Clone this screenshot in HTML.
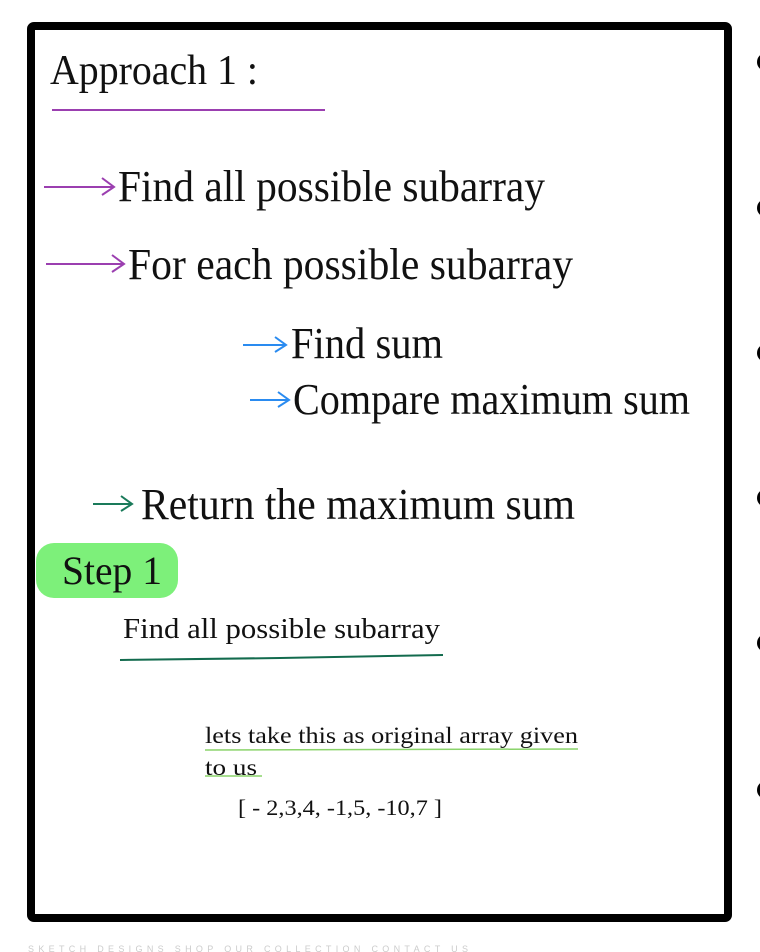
<!DOCTYPE html>
<html><head><meta charset="utf-8"><style>
html,body{margin:0;padding:0;background:#fff;width:760px;height:952px;overflow:hidden}
svg{display:block}
text{font-family:"Liberation Serif",serif;fill:#111}
</style></head><body>
<svg width="760" height="952" viewBox="0 0 760 952">
<rect x="31" y="26" width="697" height="892" rx="3" fill="#fff" stroke="#000" stroke-width="8"/>
<g fill="#000">
<circle cx="766" cy="62" r="9"/><circle cx="766" cy="208" r="9"/><circle cx="766" cy="353" r="9"/>
<circle cx="766" cy="498" r="9"/><circle cx="766" cy="643" r="9"/><circle cx="766" cy="790" r="9"/>
</g>
<text x="50" y="84" font-size="42" textLength="208" lengthAdjust="spacingAndGlyphs">Approach 1 :</text>
<line x1="52" y1="110" x2="325" y2="110" stroke="#9b3fb0" stroke-width="2"/>
<g stroke="#9b3fb0" stroke-width="2" fill="none">
<path d="M44 187 H114 M102 178 L114 187 L102 195"/>
<path d="M46 264 H124 M112 255 L124 264 L112 272"/>
</g>
<text x="118" y="201" font-size="44" textLength="427" lengthAdjust="spacingAndGlyphs">Find all possible subarray</text>
<text x="128" y="279" font-size="44" textLength="445" lengthAdjust="spacingAndGlyphs">For each possible subarray</text>
<g stroke="#2a8bf0" stroke-width="2" fill="none">
<path d="M243 345 H286 M275 337 L286 345 L275 352"/>
<path d="M250 400 H289 M278 392 L289 400 L278 407"/>
</g>
<text x="291" y="358" font-size="44" textLength="152" lengthAdjust="spacingAndGlyphs">Find sum</text>
<text x="293" y="414" font-size="44" textLength="397" lengthAdjust="spacingAndGlyphs">Compare maximum sum</text>
<path d="M93 504 H132 M121 496 L132 504 L121 511" stroke="#1a7a5a" stroke-width="2" fill="none"/>
<text x="141" y="519" font-size="44" textLength="434" lengthAdjust="spacingAndGlyphs">Return the maximum sum</text>
<rect x="36" y="543" width="142" height="55" rx="18" fill="#7df07a"/>
<text x="62" y="584" font-size="40" textLength="100" lengthAdjust="spacingAndGlyphs">Step 1</text>
<text x="123" y="638" font-size="28" textLength="317" lengthAdjust="spacingAndGlyphs">Find all possible subarray</text>
<path d="M120 660 L280 658 L443 655" stroke="#136b4e" stroke-width="2" fill="none"/>
<text x="205" y="743" font-size="23" textLength="373" lengthAdjust="spacingAndGlyphs">lets take this as original array given</text>
<line x1="205" y1="750" x2="578" y2="749" stroke="#8ad36a" stroke-width="1.5"/>
<text x="205" y="775" font-size="23" textLength="52" lengthAdjust="spacingAndGlyphs">to us</text>
<line x1="205" y1="776" x2="262" y2="776" stroke="#8ad36a" stroke-width="1.5"/>
<text x="238" y="815" font-size="22" textLength="204" lengthAdjust="spacingAndGlyphs">[ - 2,3,4, -1,5, -10,7 ]</text>
<text x="28" y="952" font-size="9" textLength="440" style="fill:#ccc;font-family:'Liberation Sans',sans-serif">SKETCH DESIGNS      SHOP OUR COLLECTION      CONTACT US</text>
</svg>
</body></html>
